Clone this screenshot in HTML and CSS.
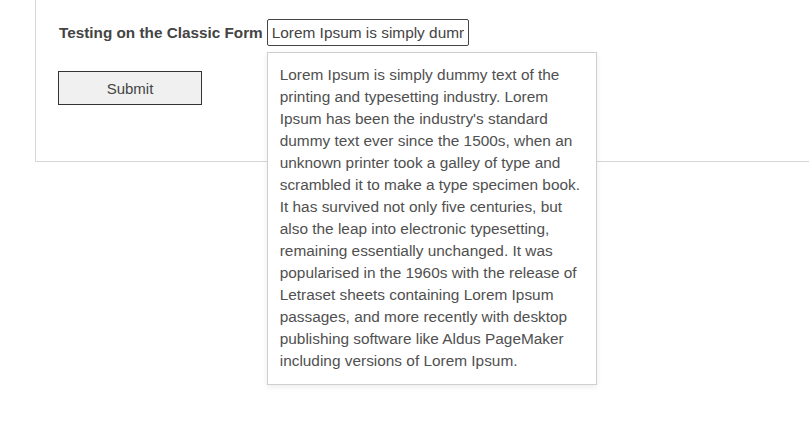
FILE: index.html
```html
<!DOCTYPE html>
<html lang="en">

<head>
    <meta charset="UTF-8">
    <meta name="viewport" content="width=device-width, initial-scale=1.0">
    <title>Classic Form</title>
    <link rel="stylesheet" href="styles.css">
</head>

<body>
    <div class="panel">
        <div class="form-row">
            <label for="classicInput">Testing on the Classic Form</label>
            <div class="field">
                <input type="text" id="classicInput" value="Lorem Ipsum is simply dummy text of the printing and typesetting industry." />
                <div class="tooltip">
                    Lorem Ipsum is simply dummy text of the printing and typesetting industry. Lorem Ipsum has been the
                    industry's standard dummy text ever since the 1500s, when an unknown printer took a galley of type
                    and scrambled it to make a type specimen book. It has survived not only five centuries, but also
                    the leap into electronic typesetting, remaining essentially unchanged. It was popularised in the
                    1960s with the release of Letraset sheets containing Lorem Ipsum passages, and more recently with
                    desktop publishing software like Aldus PageMaker including versions of Lorem Ipsum.
                </div>
            </div>
        </div>
        <div>
            <button id="submitButton">Submit</button>
        </div>
    </div>
</body>

</html>
```

FILE: styles.css
```css
html,
body {
    min-height: 100vh;
}

body {
    margin: 0;
    font-family: 'Liberation Sans', Arial, sans-serif;
    background-color: #ffffff;
    color: #444;
}

.panel {
    margin-left: 35px;
    height: 162px;
    box-sizing: border-box;
    padding: 19px 0 0 22px;
    border-left: 1px solid #d6d6d6;
    border-bottom: 1px solid #d6d6d6;
}

.form-row {
    display: flex;
    align-items: center;
    gap: 4px;
}

label {
    padding-left: 1px;
    font-size: 15.3px;
    font-weight: bold;
    color: #444;
}

.field {
    position: relative;
}

input[type="text"] {
    width: 202px;
    height: 27px;
    box-sizing: border-box;
    margin: 0;
    padding: 0 4px;
    border: 1px solid #444;
    border-radius: 2px;
    font-family: inherit;
    font-size: 15.4px;
    color: #444;
    outline: none;
}

.tooltip {
    position: absolute;
    top: 33px;
    left: 0;
    width: 330px;
    box-sizing: border-box;
    padding: 11px 12px 12px 12px;
    background: #ffffff;
    border: 1px solid #cfcfcf;
    box-shadow: 0 2px 6px rgba(0, 0, 0, 0.08);
    font-size: 15.4px;
    line-height: 22px;
    color: #505050;
    z-index: 10;
}

button {
    margin-top: 25px;
    width: 144px;
    height: 34px;
    background-color: #f0f0f0;
    border: 1px solid #333;
    font-family: inherit;
    font-size: 15px;
    color: #444;
    cursor: pointer;
}
```
